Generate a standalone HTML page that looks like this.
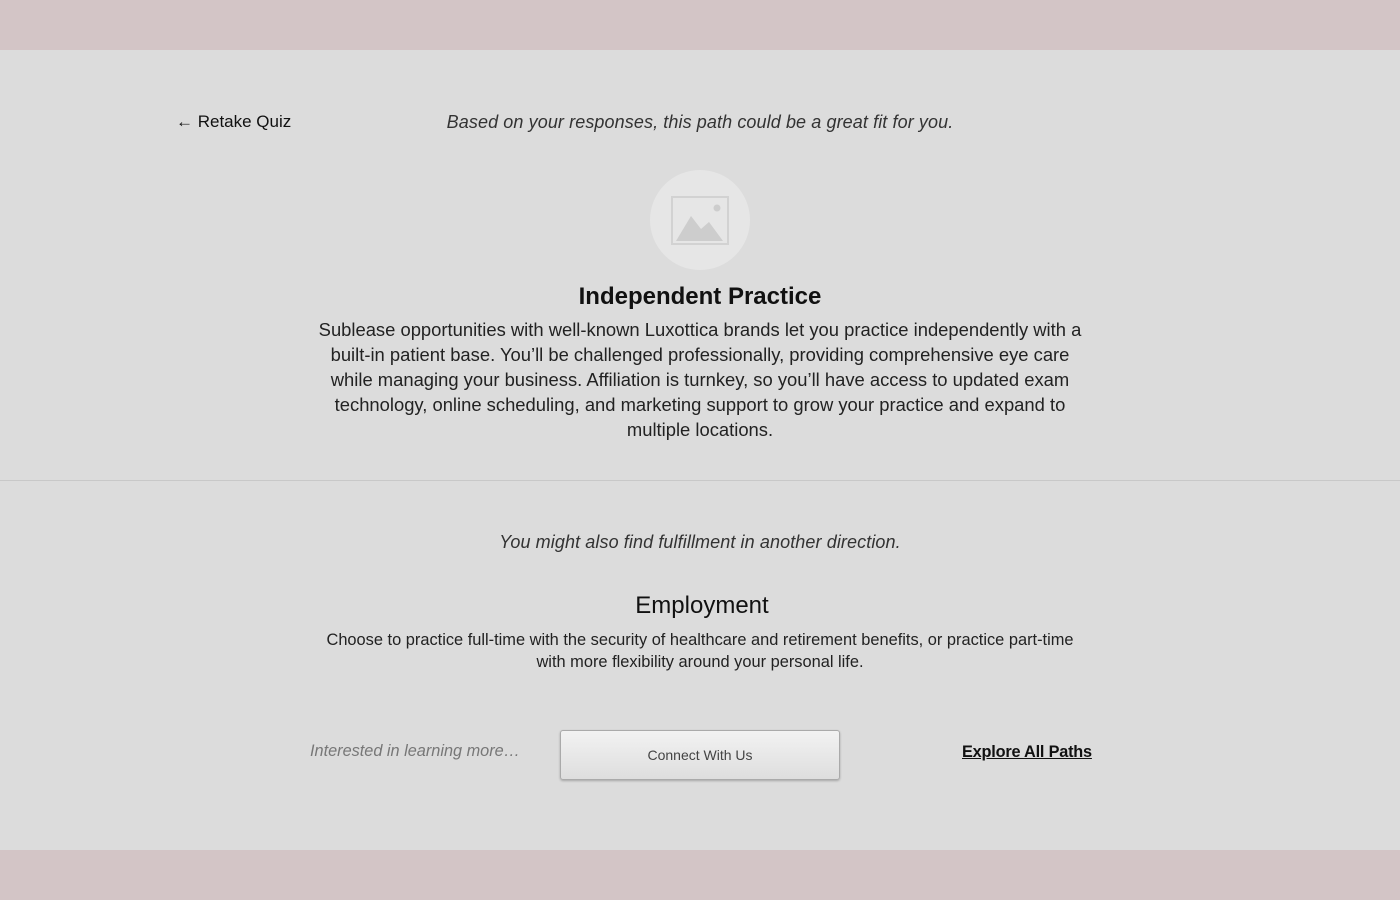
<!DOCTYPE html>
<html><head><meta charset="utf-8"><style>
body{margin:0;width:1400px;height:900px;background:#d3c5c6;font-family:"Liberation Sans",sans-serif;overflow:hidden;position:relative}
.main{position:absolute;top:50px;left:0;width:1400px;height:800px;background:#dcdcdc}
.abs{position:absolute}
.c{left:0;width:1400px;text-align:center}
</style></head><body>
<div class="main">
<div class="abs" style="left:176px;top:62px;font-size:17px;color:#111">← Retake Quiz</div>
<div class="abs c" style="top:62px;font-size:18px;font-style:italic;color:#333;letter-spacing:0.1px">Based on your responses, this path could be a great fit for you.</div>
<div class="abs" style="left:650px;top:120px;width:100px;height:100px;border-radius:50%;background:#e6e6e6"></div>
<svg class="abs" style="left:671px;top:146px" width="58" height="50" viewBox="0 0 58 50"><rect x="1" y="1" width="56" height="47" fill="none" stroke="#d2d2d2" stroke-width="2"/><path d="M5 45 L20 20 L30 33 L38 26 L52 45Z" fill="#cdcdcd"/><circle cx="46" cy="12" r="3.5" fill="#cdcdcd"/></svg>
<div class="abs c" style="top:233px;font-size:24px;font-weight:bold;color:#111">Independent Practice</div>
<div class="abs c" style="top:267px;font-size:18.4px;line-height:25px;color:#222;white-space:nowrap">Sublease opportunities with well-known Luxottica brands let you practice independently with a<br>built-in patient base. You’ll be challenged professionally, providing comprehensive eye care<br>while managing your business. Affiliation is turnkey, so you’ll have access to updated exam<br>technology, online scheduling, and marketing support to grow your practice and expand to<br>multiple locations.</div>
<div class="abs" style="left:0;top:430px;width:1400px;height:1px;background:#c8c8c8"></div>
<div class="abs c" style="top:482px;font-size:18px;font-style:italic;color:#333;letter-spacing:0.1px">You might also find fulfillment in another direction.</div>
<div class="abs c" style="top:542px;font-size:24px;color:#111;padding-left:4px;box-sizing:border-box">Employment</div>
<div class="abs c" style="top:579px;font-size:16.4px;line-height:22px;color:#222;white-space:nowrap">Choose to practice full-time with the security of healthcare and retirement benefits, or practice part-time<br>with more flexibility around your personal life.</div>
<div class="abs" style="left:310px;top:692px;font-size:16.3px;font-style:italic;color:#777">Interested in learning more…</div>
<div class="abs" style="left:560px;top:680px;width:278px;height:48px;border:1px solid #aaa;border-radius:3px;background:linear-gradient(#f2f2f2,#dedede);box-shadow:0 1px 2px rgba(0,0,0,.25);text-align:center;line-height:48px;font-size:14px;color:#444">Connect With Us</div>
<div class="abs" style="left:962px;top:693px;font-size:16.3px;font-weight:bold;color:#111;text-decoration:underline;letter-spacing:-0.2px">Explore All Paths</div>
</div>
</body></html>
